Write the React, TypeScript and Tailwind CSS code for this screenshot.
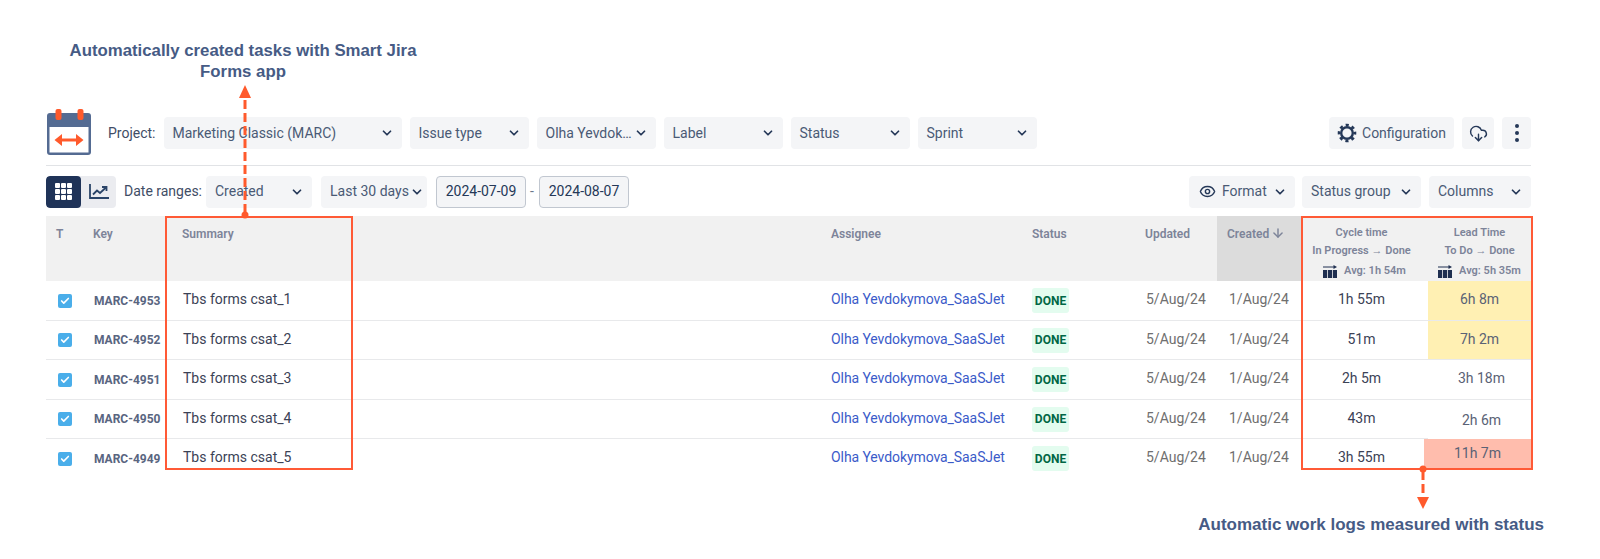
import React from "react";
import { ChevronDown, Eye, CloudDownload, Check, ArrowDown } from "lucide-react";

const rows = [
  { key: "MARC-4953", name: "Tbs forms csat_1", cycle: "1h 55m", lead: "6h 8m", tone: "yellow", height: "h-[40px]" },
  { key: "MARC-4952", name: "Tbs forms csat_2", cycle: "51m", lead: "7h 2m", tone: "yellow", height: "h-[39px]" },
  { key: "MARC-4951", name: "Tbs forms csat_3", cycle: "2h 5m", lead: "3h 18m", tone: "none", height: "h-[40px]" },
  { key: "MARC-4950", name: "Tbs forms csat_4", cycle: "43m", lead: "2h 6m", tone: "none", height: "h-[39px]" },
  { key: "MARC-4949", name: "Tbs forms csat_5", cycle: "3h 55m", lead: "11h 7m", tone: "red", height: "h-[39px]" },
];

function Select({ label, className }: { label: string; className: string }) {
  return (
    <div className={`flex h-8 items-center justify-between rounded-[4px] bg-[#f4f5f7] pl-[9px] pr-2 text-[14px] text-[#4a5a75] ${className}`}>
      <span className="whitespace-nowrap">{label}</span>
      <ChevronDown size={14} strokeWidth={3} className="shrink-0 text-[#253858]" />
    </div>
  );
}

function DateBox({ value }: { value: string }) {
  return (
    <div className="flex h-8 w-[90px] items-center justify-center rounded-[4px] border border-[#c1c7d0] bg-[#f4f5f7] text-[14px] text-[#253858]">
      {value}
    </div>
  );
}

function CalendarLogo() {
  return (
    <svg width="46" height="46" viewBox="0 0 46 46" className="shrink-0">
      <rect x="1" y="4" width="44" height="42" rx="3" fill="#546b92" />
      <rect x="3.5" y="18" width="39" height="25.5" fill="#ffffff" />
      <rect x="9.5" y="0" width="6" height="11" rx="2" fill="#ff5a2c" />
      <rect x="31.5" y="0" width="6" height="11" rx="2" fill="#ff5a2c" />
      <path d="M12 31h22" stroke="#ff5a2c" strokeWidth="3" />
      <path d="M16 25l-7.5 6 7.5 6zM30 25l7.5 6-7.5 6z" fill="#ff5a2c" />
    </svg>
  );
}

function AvgIcon() {
  return (
    <svg width="14" height="13" viewBox="0 0 14 13" className="shrink-0">
      <path d="M0 2h11" stroke="#1f2f50" strokeWidth="1" />
      <path d="M10.5 0l3.5 2-3.5 2z" fill="#1f2f50" />
      <rect x="0" y="5" width="4.2" height="8" fill="#1f2f50" />
      <rect x="5" y="5" width="4.2" height="8" fill="#1f2f50" />
      <rect x="10" y="5" width="4" height="8" fill="#1f2f50" />
    </svg>
  );
}

function GridIcon() {
  return (
    <svg width="17" height="17" viewBox="0 0 17 17">
      {[0, 6, 12].map((y) =>
        [0, 6, 12].map((x) => <rect key={`${x}-${y}`} x={x} y={y} width="5" height="5" rx="1" fill="#ffffff" />)
      )}
    </svg>
  );
}

function ChartIcon() {
  return (
    <svg width="20" height="15" viewBox="0 0 20 15" fill="none" stroke="#2a4468" strokeWidth="1.8">
      <path d="M1 0v14h19" />
      <path d="M4 10.5l4-4 3 2.5 6-5.5" />
      <path d="M13 3h4.5v4" />
    </svg>
  );
}

function GearIcon() {
  return (
    <svg width="20" height="20" viewBox="0 0 20 20" fill="none" stroke="#253858" className="shrink-0">
      <circle cx="10" cy="10" r="5.8" strokeWidth="2.4" />
      <circle cx="10" cy="10" r="8" strokeWidth="2.6" strokeDasharray="3.14 3.14" strokeDashoffset="1.57" />
    </svg>
  );
}

function UpArrow() {
  return (
    <svg width="14" height="134" viewBox="0 0 14 134" className="absolute left-[238px] top-[85px]">
      <path d="M7 0l6 13H1z" fill="#ff5a2c" />
      <path d="M7 128V12" stroke="#ff5a2c" strokeWidth="3" strokeDasharray="9 4" />
      <circle cx="7" cy="130" r="3.5" fill="#ff5a2c" />
    </svg>
  );
}

function DownArrow() {
  return (
    <svg width="14" height="44" viewBox="0 0 14 44" className="absolute left-[1416px] top-[465px]">
      <circle cx="7" cy="4" r="3.5" fill="#ff5a2c" />
      <path d="M7 6v26" stroke="#ff5a2c" strokeWidth="3" strokeDasharray="9 4" />
      <path d="M1 32h12L7 44z" fill="#ff5a2c" />
    </svg>
  );
}

const gridCols = "grid grid-cols-[36px_86px_652px_202px_113px_82px_84px_127px_103px]";

export default function App() {
  return (
    <div className="relative h-[559px] w-[1600px] overflow-hidden bg-white font-['Roboto',sans-serif]">
      <div className="h-[109px] w-[420px] pl-[66px] pt-[40px] text-center font-['Liberation_Sans',sans-serif] text-[16.8px] font-bold leading-[21px] text-[#465b85]">
        Automatically created tasks with Smart Jira
        <br />
        Forms app
      </div>

      <div className="pl-[46px] pr-[69px]">
        <div className="flex h-[57px] items-start border-b border-[#e1e3e6]">
          <CalendarLogo />
          <div className="mt-[8px] flex flex-1 items-center">
            <span className="ml-[16px] text-[14px] text-[#3f4d66]">Project:</span>
            <Select label="Marketing Classic (MARC)" className="ml-[8px] w-[238px]" />
            <Select label="Issue type" className="ml-2 w-[119px]" />
            <Select label="Olha Yevdok…" className="ml-2 w-[119px]" />
            <Select label="Label" className="ml-2 w-[119px]" />
            <Select label="Status" className="ml-2 w-[119px]" />
            <Select label="Sprint" className="ml-2 w-[119px]" />
            <div className="ml-auto flex h-8 w-[125px] items-center justify-center gap-[5px] rounded-[4px] bg-[#f4f5f7] text-[14px] text-[#4a5a75]">
              <GearIcon />
              Configuration
            </div>
            <div className="ml-2 flex h-8 w-8 items-center justify-center rounded-[4px] bg-[#f4f5f7]">
              <CloudDownload size={19} strokeWidth={1.8} className="text-[#253858]" />
            </div>
            <div className="ml-2 flex h-8 w-[29px] flex-col items-center justify-center gap-[3px] rounded-[4px] bg-[#f4f5f7]">
              <span className="h-[4px] w-[4px] rounded-full bg-[#253858]" />
              <span className="h-[4px] w-[4px] rounded-full bg-[#253858]" />
              <span className="h-[4px] w-[4px] rounded-full bg-[#253858]" />
            </div>
          </div>
        </div>

        <div className="flex h-[50px] items-center pt-[1px]">
          <div className="flex h-8 w-[70px] overflow-hidden rounded-[4px] bg-[#ebecf0]">
            <div className="flex w-[35px] items-center justify-center rounded-[4px] bg-[#1f3358]">
              <GridIcon />
            </div>
            <div className="flex flex-1 items-center justify-center">
              <ChartIcon />
            </div>
          </div>
          <span className="ml-2 text-[14px] text-[#3f4d66]">Date ranges:</span>
          <Select label="Created" className="ml-[4px] w-[106px]" />
          <Select label="Last 30 days" className="ml-[9px] w-[106px] pr-[3px]" />
          <div className="ml-[9px]">
            <DateBox value="2024-07-09" />
          </div>
          <span className="mx-[4px] w-[5px] text-[14px] text-[#6b778c]">-</span>
          <DateBox value="2024-08-07" />
          <div className="ml-auto flex h-8 w-[106px] items-center justify-between rounded-[4px] bg-[#f4f5f7] pl-[10px] pr-2 text-[14px] text-[#4a5a75]">
            <span className="flex items-center gap-[6px]">
              <Eye size={17} strokeWidth={2} className="text-[#253858]" />
              Format
            </span>
            <ChevronDown size={14} strokeWidth={3} className="text-[#253858]" />
          </div>
          <Select label="Status group" className="ml-[7px] w-[119px]" />
          <Select label="Columns" className="ml-2 w-[102px]" />
        </div>

        <div className={`${gridCols} h-[65px] bg-[#f1f1f1] text-[12px] font-semibold text-[#7d8499]`}>
          <div className="pl-[10px] pt-[9px]">T</div>
          <div className="pl-[11px] pt-[9px]">Key</div>
          <div className="pl-[14px] pt-[9px]">Summary</div>
          <div className="pl-[11px] pt-[9px]">Assignee</div>
          <div className="pl-[10px] pt-[9px]">Status</div>
          <div className="pl-[10px] pt-[9px]">Updated</div>
          <div className="flex items-start gap-[2px] bg-[#dcdcdc] pl-[10px] pt-[9px]">
            Created
            <ArrowDown size={14} strokeWidth={2.5} className="mt-[1px]" />
          </div>
          <div className="flex flex-col items-center pr-[6px] pt-[10px] text-[11px]">
            <span className="leading-[14px]">Cycle time</span>
            <span className="mt-[4px] leading-[14px]">In Progress → Done</span>
            <span className="ml-[6px] mt-[6px] flex items-center gap-[7px] leading-[14px]">
              <AvgIcon />
              Avg: 1h 54m
            </span>
          </div>
          <div className="flex flex-col items-center pt-[10px] text-[11px]">
            <span className="leading-[14px]">Lead Time</span>
            <span className="mt-[4px] leading-[14px]">To Do → Done</span>
            <span className="mt-[6px] flex items-center gap-[7px] leading-[14px]">
              <AvgIcon />
              Avg: 5h 35m
            </span>
          </div>
        </div>

        {rows.map((row, i) => (
          <div key={row.key} className={`${gridCols} ${row.height} text-[14px]`}>
            <div className={`col-span-8 grid grid-cols-subgrid items-center ${i < 4 ? "border-b-[1.5px] border-[#e8e9eb]" : ""}`}>
              <div className="flex justify-center pl-[2px]">
                <span className="flex h-[14px] w-[14px] items-center justify-center rounded-[2px] bg-[#4aaeea]">
                  <Check size={10} strokeWidth={4} className="text-white" />
                </span>
              </div>
              <div className="pl-[12px] text-[12px] font-bold text-[#596580]">{row.key}</div>
              <div className="pb-[2px] pl-[15px] text-[#3b4256]">{row.name}</div>
              <div className="pb-[2px] pl-[11px] tracking-[-0.08px] text-[#3b5bc9]">Olha Yevdokymova_SaaSJet</div>
              <div className="pl-[10px]">
                <span className="flex h-[25px] w-[37px] items-center justify-center rounded-[3px] bg-[#e3fcef] text-[12px] font-bold text-[#006644]">
                  DONE
                </span>
              </div>
              <div className="pb-[2px] pl-[11px] text-[#6f6f6f]">5/Aug/24</div>
              <div className="pb-[2px] pl-[12px] text-[#6f6f6f]">1/Aug/24</div>
              <div className="pb-[2px] pr-[6px] text-center text-[#3b4256]">{row.cycle}</div>
            </div>
            <div
              className={`flex items-center justify-center pb-[2px] text-[#5a6275] ${
                row.tone === "yellow"
                  ? "bg-[#fff0b3] border-b-[1.5px] border-[#e8e9eb]"
                  : row.tone === "red"
                    ? "-ml-[4px] h-[31px] bg-[#ffbdad]"
                    : i === 2
                      ? "border-b-[1.5px] border-[#e8e9eb] pl-[4px]"
                      : "pl-[4px] pt-[3px]"
              }`}
            >
              {row.lead}
            </div>
          </div>
        ))}
      </div>

      <div className="pr-[56px] pt-[36px] text-right font-['Liberation_Sans',sans-serif] text-[17px] font-bold leading-[21px] text-[#465b85]">
        Automatic work logs measured with status
      </div>

      <div className="absolute left-[165px] top-[216px] h-[254px] w-[188px] border-2 border-[#ff5a36]" />
      <div className="absolute left-[1301px] top-[216px] h-[254px] w-[232px] border-2 border-[#ff5a36]" />
      <UpArrow />
      <DownArrow />
    </div>
  );
}
